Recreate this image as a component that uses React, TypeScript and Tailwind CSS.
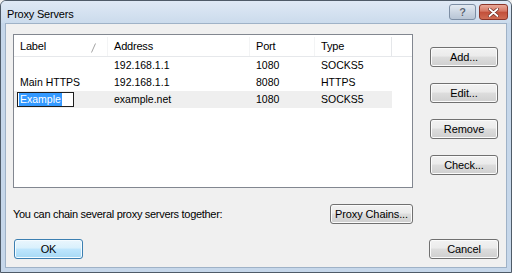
import React from "react";

const uiFont = { fontFamily: '"Liberation Sans", Arial, sans-serif' };

interface Row {
  label: string;
  address: string;
  port: string;
  type: string;
  editing?: boolean;
}

const rows: Row[] = [
  { label: "", address: "192.168.1.1", port: "1080", type: "SOCKS5" },
  { label: "Main HTTPS", address: "192.168.1.1", port: "8080", type: "HTTPS" },
  { label: "Example", address: "example.net", port: "1080", type: "SOCKS5", editing: true },
];

function Btn({
  children,
  className = "",
  primary = false,
}: {
  children: React.ReactNode;
  className?: string;
  primary?: boolean;
}) {
  return (
    <div
      className={
        "flex h-[20px] items-center justify-center rounded-[3px] border text-[11px] tracking-[-0.1px] text-black " +
        (primary
          ? "border-[#3c7fb1] bg-[linear-gradient(#eaf6fd,#d9f0fc_45%,#bee6fd_50%,#a7d9f5)] shadow-[inset_0_0_0_1px_#f4fbff] "
          : "border-[#707070] bg-[linear-gradient(#f2f2f2,#ebebeb_45%,#dddddd_50%,#cfcfcf)] shadow-[inset_0_0_0_1px_#fbfbfb] ") +
        className
      }
    >
      {children}
    </div>
  );
}

export default function App() {
  return (
    <div className="h-[273px] w-[512px] overflow-hidden bg-[#f0f0f0]" style={uiFont}>
      <div className="flex h-full flex-col rounded-t-[6px] border border-[#4f5b68] bg-[#c6d7ea]">
        {/* title bar */}
        <div className="flex h-[22px] items-start rounded-t-[5px] bg-[linear-gradient(#dfe9f5,#cbdbec)] pr-[3px] pt-[3px]">
          <span className="ml-[6px] mt-[2px] text-[11px] tracking-[-0.2px] text-black">Proxy Servers</span>
          <div className="ml-auto flex h-[16px] w-[27px] items-center justify-center rounded-[3px] border border-[#7d8ea4] bg-[linear-gradient(#e3eaf2,#ccd6e2_50%,#b8c5d5)]">
            <span className="text-[11px] font-bold leading-none text-[#5a6575] [text-shadow:0_0_1px_#fff]">?</span>
          </div>
          <div className="ml-[3px] flex h-[16px] w-[29px] items-center justify-center rounded-[3px] border border-[#8b3529] bg-[linear-gradient(#e9a999,#d57663_45%,#c24f3a_50%,#cf6b52)]">
            <svg width="11" height="9" viewBox="0 0 11 9">
              <path d="M1.5 1 L9.5 8 M9.5 1 L1.5 8" stroke="#6b2a22" strokeWidth="3.2" strokeLinecap="round" />
              <path d="M1.5 1 L9.5 8 M9.5 1 L1.5 8" stroke="#ffffff" strokeWidth="1.8" strokeLinecap="round" />
            </svg>
          </div>
        </div>

        {/* client area */}
        <div className="mx-[4px] mb-[4px] flex flex-1 flex-col border border-[#9fb2c7] bg-[#f0f0f0] pl-[7px] pt-[10px]">
          <div className="flex">
            {/* list view */}
            <div className="h-[154px] w-[400px] border border-[#828790] bg-white">
              <div className="flex h-[22px] border-b border-[#e6e8eb] pt-[2px] text-[11px] tracking-[-0.2px] text-black">
                <div className="relative flex w-[94px] items-center border-r border-[#f3f4f5] pl-[6px]">
                  Label
                  <svg className="absolute left-[77px] top-[6px]" width="5" height="10" viewBox="0 0 5 10">
                    <path d="M4.5 0.5 L0.5 9.5" stroke="#a3a3a3" strokeWidth="1" />
                  </svg>
                </div>
                <div className="flex w-[142px] items-center border-r border-[#f3f4f5] pl-[6px]">Address</div>
                <div className="flex w-[65px] items-center border-r border-[#f3f4f5] pl-[6px]">Port</div>
                <div className="flex w-[77px] items-center border-r border-[#e5e7ea] pl-[6px]">Type</div>
              </div>
              {rows.map((r, i) => (
                <div
                  key={i}
                  className={
                    "flex h-[17px] w-[378px] items-center text-[10.5px] text-black " +
                    (r.editing ? "bg-[#efefef]" : "")
                  }
                >
                  <div className="flex w-[94px] items-center pl-[6px]">
                    {r.editing ? (
                      <div className="-ml-[3px] flex h-[15px] w-[57px] items-center border border-[#1e1e1e] bg-white pl-[1px]">
                        <span className="bg-[#3399ff] px-[1px] leading-[13px] text-white">{r.label}</span>
                      </div>
                    ) : (
                      r.label
                    )}
                  </div>
                  <div className="w-[142px] pl-[6px]">{r.address}</div>
                  <div className="w-[65px] pl-[6px]">{r.port}</div>
                  <div className="w-[77px] pl-[6px]">{r.type}</div>
                </div>
              ))}
            </div>

            {/* side buttons */}
            <div className="ml-[17px] flex flex-col gap-[16px] pt-[13px]">
              <Btn className="w-[68px]">Add...</Btn>
              <Btn className="w-[68px]">Edit...</Btn>
              <Btn className="w-[68px]">Remove</Btn>
              <Btn className="w-[68px]">Check...</Btn>
            </div>
          </div>

          <div className="mt-[16px] flex w-[400px] items-center justify-between">
            <span className="text-[11px] tracking-[-0.3px] text-black">You can chain several proxy servers together:</span>
            <Btn className="w-[83px]">Proxy Chains...</Btn>
          </div>

          <div className="mt-[15px] flex">
            <Btn primary className="ml-[1px] w-[69px]">
              OK
            </Btn>
            <Btn className="ml-[346px] w-[70px]">Cancel</Btn>
          </div>
        </div>
      </div>
    </div>
  );
}
